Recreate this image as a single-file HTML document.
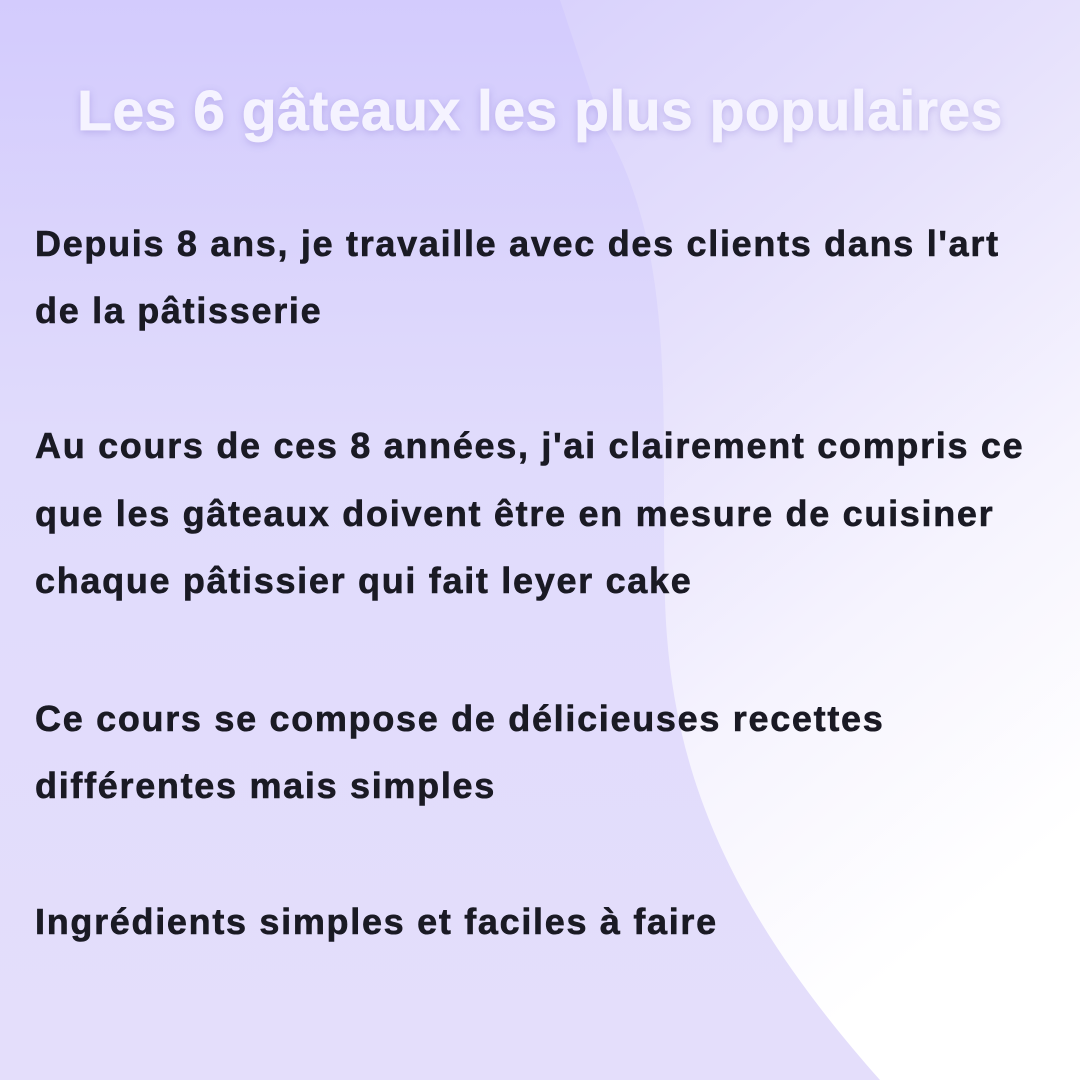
<!DOCTYPE html>
<html><head><meta charset="utf-8"><style>
html,body{margin:0;padding:0}
body{width:1080px;height:1080px;position:relative;overflow:hidden;background:linear-gradient(180deg,#d3cbfd 0%,#e0dbfc 40%,#e4defb 100%);font-family:"Liberation Sans",sans-serif}
svg{position:absolute;left:0;top:0}
.t{position:absolute;left:0;width:1080px;top:78px;text-align:center;color:#f5f3ff;font-weight:bold;font-size:57px;letter-spacing:0.5px;-webkit-text-stroke:0.8px #f5f3ff;text-shadow:0 2px 8px rgba(120,100,200,0.35)}
.l{position:absolute;left:35px;color:#1a1a24;font-weight:bold;font-size:36px;letter-spacing:1.7px;-webkit-text-stroke:0.6px #1a1a24;white-space:nowrap}
</style></head><body>
<svg width="1080" height="1080">
<defs><linearGradient id="g" x1="0" y1="0" x2="0.4" y2="1">
<stop offset="0" stop-color="#d9d2fc"/><stop offset="0.35" stop-color="#e6e1fc"/><stop offset="0.7" stop-color="#f6f4fe"/><stop offset="1" stop-color="#ffffff"/></linearGradient></defs>
<path d="M600 120 C680 250 660 420 665 600 C670 760 720 900 880 1080 L1080 1080 L1080 0 L560 0 Z" fill="url(#g)"/>
</svg>
<div class="t">Les 6 gâteaux les plus populaires</div>
<div class="l" style="top:223px">Depuis 8 ans, je travaille avec des clients dans l'art</div>
<div class="l" style="top:290px">de la pâtisserie</div>
<div class="l" style="top:425px">Au cours de ces 8 années, j'ai clairement compris ce</div>
<div class="l" style="top:493px">que les gâteaux doivent être en mesure de cuisiner</div>
<div class="l" style="top:560px">chaque pâtissier qui fait leyer cake</div>
<div class="l" style="top:698px">Ce cours se compose de délicieuses recettes</div>
<div class="l" style="top:765px">différentes mais simples</div>
<div class="l" style="top:901px">Ingrédients simples et faciles à faire</div>
</body></html>
